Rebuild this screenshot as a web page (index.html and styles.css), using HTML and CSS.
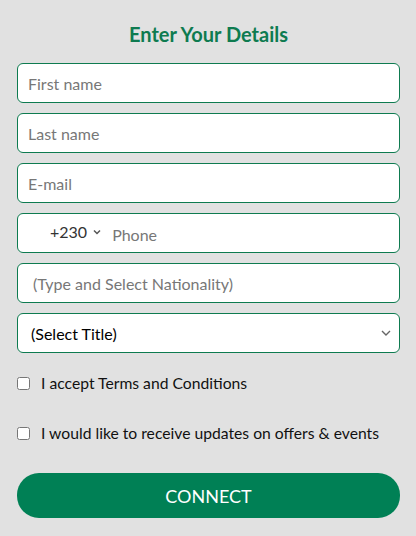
FILE: index.html
```html
<!DOCTYPE html>
<html lang="en">
<head>
  <meta charset="UTF-8" />
  <meta name="viewport" content="width=device-width, initial-scale=1.0"/>
  <title>Enter Your Details</title>
  <link rel="stylesheet" href="styles.css">
</head>
<body>
  <form class="details">
    <h2>Enter Your Details</h2>
    <div class="fields">
      <input type="text" class="field" placeholder="First name">
      <input type="text" class="field" placeholder="Last name">
      <input type="email" class="field" placeholder="E-mail">
      <div class="field phone">
        <span class="code">+230
          <svg width="8" height="6" viewBox="0 0 8 6"><path d="M1 1.5 L4 4.5 L7 1.5" fill="none" stroke="#555" stroke-width="1.5"/></svg>
        </span>
        <input type="tel" placeholder="Phone">
      </div>
      <input type="text" class="field" placeholder="(Type and Select Nationality)">
      <div class="select-wrap">
        <select class="field">
          <option>(Select Title)</option>
          <option>Mr</option>
          <option>Mrs</option>
          <option>Ms</option>
        </select>
        <svg class="arrow" width="10" height="6" viewBox="0 0 10 6"><path d="M1 1 L5 5 L9 1" fill="none" stroke="#666" stroke-width="1.4"/></svg>
      </div>
    </div>
    <label class="check"><input type="checkbox"> I accept Terms and Conditions</label>
    <label class="check second"><input type="checkbox"> I would like to receive updates on offers &amp; events</label>
    <button type="button" class="connect">CONNECT</button>
  </form>
</body>
</html>
```
FILE: styles.css
```css
body { margin: 0; background: #e1e1e1; font-family: Lato, "Open Sans", sans-serif; color: #111; }
.details { padding: 0 16px 0 17px; }
h2 {
  margin: 22px 0 17px;
  font-size: 20px;
  line-height: 24px;
  text-align: center;
  color: #0e7b50;
}
.fields { display: flex; flex-direction: column; gap: 10px; }
.field {
  box-sizing: border-box;
  width: 100%;
  height: 40px;
  border: 1px solid #0e7b50;
  border-radius: 6px;
  background: #fff;
  padding: 0 10px;
  font-family: inherit;
  font-size: 16px;
  font-weight: 400;
  color: #111;
  outline: none;
}
.field::placeholder, .phone input::placeholder { color: #777; }
.phone { display: flex; align-items: center; padding: 0; }
.code {
  display: flex;
  align-items: center;
  gap: 6px;
  padding: 0 0 0 32px;
  font-size: 16px;
  color: #333;
  margin-top: -3px;
}
.phone input {
  flex: 1;
  border: 0;
  outline: none;
  background: none;
  font-family: inherit;
  font-size: 16px;
  padding: 0 0 0 11px;
  height: 36px;
  margin-top: 2px;
}
.fields > input:nth-child(5) { padding-left: 15px; }
.select-wrap { position: relative; }
.select-wrap select { appearance: none; -webkit-appearance: none; padding-left: 13px; color: #000; }
.arrow { position: absolute; right: 9px; top: 17px; pointer-events: none; }
.check {
  display: flex;
  align-items: center;
  gap: 11px;
  margin-top: 20px;
  height: 20px;
  font-size: 15.7px;
  color: #111;
}
.check.second { margin-top: 30px; }
.check input { margin: 0; width: 13px; height: 13px; }
.connect {
  display: block;
  width: 100%;
  height: 45px;
  margin-top: 30px;
  border: 0;
  border-radius: 22px;
  background: #008055;
  color: #fff;
  font-family: inherit;
  font-size: 18px;
}
```
